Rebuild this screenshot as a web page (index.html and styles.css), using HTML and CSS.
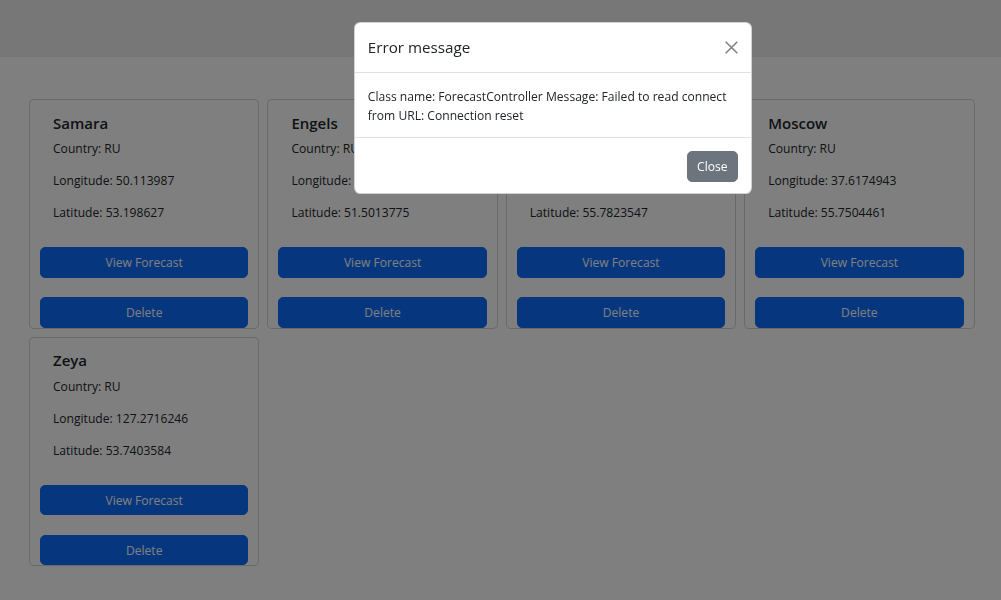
FILE: index.html
```html
<!DOCTYPE html>
<html lang="en">
<head>
<meta charset="utf-8">
<title>Cities</title>
<link rel="stylesheet" href="styles.css">
</head>
<body>
<header class="topbar"></header>
<main class="cards">
  <div class="card">
    <div class="card-body">
      <h5 class="card-title">Samara</h5>
      <p>Country: RU</p>
      <p>Longitude: 50.113987</p>
      <p>Latitude: 53.198627</p>
    </div>
    <div class="actions">
      <button class="btn btn-primary">View Forecast</button>
      <button class="btn btn-primary">Delete</button>
    </div>
  </div>
  <div class="card">
    <div class="card-body">
      <h5 class="card-title">Engels</h5>
      <p>Country: RU</p>
      <p>Longitude: 46.1257434</p>
      <p>Latitude: 51.5013775</p>
    </div>
    <div class="actions">
      <button class="btn btn-primary">View Forecast</button>
      <button class="btn btn-primary">Delete</button>
    </div>
  </div>
  <div class="card">
    <div class="card-body">
      <h5 class="card-title">Kazan</h5>
      <p>Country: RU</p>
      <p>Longitude: 49.1064856</p>
      <p>Latitude: 55.7823547</p>
    </div>
    <div class="actions">
      <button class="btn btn-primary">View Forecast</button>
      <button class="btn btn-primary">Delete</button>
    </div>
  </div>
  <div class="card">
    <div class="card-body">
      <h5 class="card-title">Moscow</h5>
      <p>Country: RU</p>
      <p>Longitude: 37.6174943</p>
      <p>Latitude: 55.7504461</p>
    </div>
    <div class="actions">
      <button class="btn btn-primary">View Forecast</button>
      <button class="btn btn-primary">Delete</button>
    </div>
  </div>
  <div class="card">
    <div class="card-body">
      <h5 class="card-title">Zeya</h5>
      <p>Country: RU</p>
      <p>Longitude: 127.2716246</p>
      <p>Latitude: 53.7403584</p>
    </div>
    <div class="actions">
      <button class="btn btn-primary">View Forecast</button>
      <button class="btn btn-primary">Delete</button>
    </div>
  </div>
</main>

<div class="backdrop"></div>
<div class="modal">
  <div class="modal-header">
    <h5 class="modal-title">Error message</h5>
    <button class="btn-close" aria-label="Close">
      <svg width="13" height="13" viewBox="0 0 13 13"><path d="M0.7 0.7 L12.3 12.3 M12.3 0.7 L0.7 12.3" stroke="#000" stroke-width="1.5" fill="none"/></svg>
    </button>
  </div>
  <div class="modal-body">Class name: ForecastController Message: Failed to read connect from URL: Connection reset</div>
  <div class="modal-footer">
    <button class="btn btn-secondary">Close</button>
  </div>
</div>
</body>
</html>
```

FILE: styles.css
```css
* { box-sizing: border-box; }
html, body { margin: 0; padding: 0; }
body {
  font-family: "Open Sans", "Noto Sans", sans-serif;
  font-size: 12.1px;
  line-height: 19.2px;
  color: #212529;
  background: #fff;
  overflow: hidden;
  height: 600px;
}
.topbar {
  height: 57px;
  background: #efefef;
}
.cards {
  display: grid;
  grid-template-columns: repeat(4, 230.4px);
  column-gap: 8px;
  row-gap: 8px;
  padding: 42px 0 0 29px;
  align-items: start;
}
.card {
  border: 1px solid rgba(0,0,0,.175);
  border-radius: 5px;
  display: flex;
  flex-direction: column;
  background: #fff;
}
.card-body {
  padding: 13.8px 23px 0;
}
.card-title {
  margin: 0 0 6.4px;
  font-size: 15px;
  line-height: 19.2px;
  font-weight: 600;
}
.card-body p {
  margin: 0 0 12.8px;
}
.actions {
  display: flex;
  flex-direction: column;
  gap: 19.6px;
  padding: 11.9px 10px 0;
}
.btn {
  font-family: inherit;
  font-size: 12.1px;
  line-height: 19.2px;
  border: 1px solid transparent;
  border-radius: 5px;
  padding: 4.6px 9.6px;
  cursor: pointer;
}
.btn-primary {
  background: #0d6efd;
  border-color: #0d6efd;
  color: #fff;
  width: 100%;
}
.btn-secondary {
  background: #6c757d;
  border-color: #6c757d;
  color: #fff;
  padding: 5px 9.6px;
}
.backdrop {
  position: fixed;
  inset: 0;
  background: rgba(0,0,0,.5);
}
.modal {
  position: fixed;
  left: 354px;
  top: 22px;
  width: 398px;
  background: #fff;
  border: 1px solid rgba(0,0,0,.175);
  border-radius: 6.4px;
}
.modal-header {
  display: flex;
  align-items: center;
  padding: 12.8px;
  border-bottom: 1px solid #dee2e6;
}
.modal-title {
  margin: 0;
  font-size: 15.2px;
  line-height: 23px;
  font-weight: 500;
}
.btn-close {
  margin-left: auto;
  padding: 0;
  border: 0;
  background: transparent;
  width: 13px;
  height: 13px;
  opacity: .5;
  display: flex;
}
.modal-body {
  padding: 14px 12.8px 11.6px;
}
.modal-footer {
  display: flex;
  justify-content: flex-end;
  padding: 10.2px 9.6px 8px;
  border-top: 1px solid #dee2e6;
}
.modal-footer .btn {
  margin: 3.2px;
}
```
